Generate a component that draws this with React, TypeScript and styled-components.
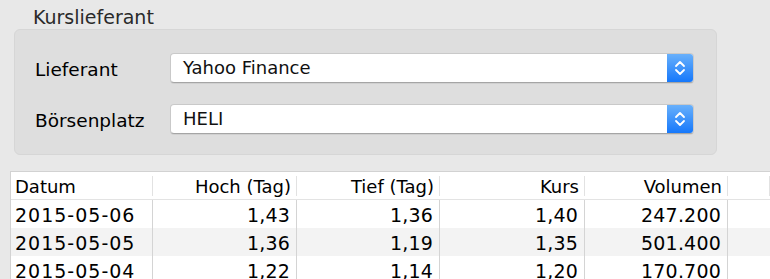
import styled, { createGlobalStyle } from 'styled-components';

const GlobalStyle = createGlobalStyle`
  html, body {
    margin: 0;
    padding: 0;
    background: #e8e8e8;
    font-family: "DejaVu Sans", "Liberation Sans", sans-serif;
    overflow: hidden;
  }
`;

const Page = styled.div`
  width: 770px;
  height: 279px;
  display: flex;
  flex-direction: column;
`;

const GroupTitle = styled.div`
  margin: 7px 0 2px 33px;
  height: 20px;
  line-height: 20px;
  font-size: 19px;
  color: #2a2a2a;
`;

const GroupBox = styled.div`
  margin-left: 14px;
  width: 703px;
  box-sizing: border-box;
  padding: 23px 22px 20px 20px;
  background: #dedede;
  border-radius: 6px;
  border: 1px solid #d6d6d6;
  display: flex;
  flex-direction: column;
  gap: 21px;
`;

const FieldRow = styled.div`
  display: flex;
  align-items: center;
`;

const Label = styled.div`
  width: 135px;
  margin-top: 3px;
  font-size: 18.5px;
  color: #000;
`;

const Popup = styled.div`
  flex: 1;
  height: 30px;
  box-sizing: border-box;
  display: flex;
  background: #fff;
  border: 1px solid #c9c9c9;
  border-bottom-color: #a5a5a5;
  border-radius: 4px;
  box-shadow: 0 1px 0 rgba(0, 0, 0, 0.06);
  overflow: hidden;
`;

const PopupValue = styled.div`
  flex: 1;
  padding-left: 12px;
  line-height: 28px;
  font-size: 18px;
  color: #111;
`;

const Stepper = styled.div`
  width: 26px;
  display: flex;
  align-items: center;
  justify-content: center;
  background: linear-gradient(#68b0fb, #1678fb);
`;

const Table = styled.div`
  margin: 16px 0 0 10px;
  background: #fff;
  border-top: 1px solid #d2d2d2;
  border-left: 1px solid #d2d2d2;
  flex: 1;
`;

const Cols = '142px 144px 143px 145px 143px 1fr';

const HeaderRow = styled.div`
  display: grid;
  grid-template-columns: ${Cols};
  height: 27px;
  border-bottom: 1px solid #e3e3e3;
`;

const HeaderCell = styled.div<{ $align?: string }>`
  display: flex;
  align-items: center;
  justify-content: ${(p) => (p.$align === 'left' ? 'flex-start' : 'flex-end')};
  padding: 1px 6px 0 4px;
  font-size: 18px;
  color: #000;
  position: relative;
  &::after {
    content: '';
    position: absolute;
    right: 0;
    top: 4px;
    bottom: 3px;
    width: 1px;
    background: #e2e2e2;
  }
`;

const Row = styled.div<{ $alt?: boolean }>`
  display: grid;
  grid-template-columns: ${Cols};
  height: 28px;
  background: ${(p) => (p.$alt ? '#f3f3f3' : '#fff')};
`;

const Cell = styled.div<{ $align?: string }>`
  display: flex;
  align-items: center;
  justify-content: ${(p) => (p.$align === 'left' ? 'flex-start' : 'flex-end')};
  padding: 1px 6px 0 4px;
  font-size: 19px;
  letter-spacing: ${(p) => (p.$align === 'left' ? '1px' : '0.2px')};
  color: #000;
  border-right: 1px solid #d4d4d4;
  &:last-child {
    border-right: none;
  }
`;

function Chevrons() {
  return (
    <svg width="12" height="18" viewBox="0 0 12 18">
      <path d="M2 7 L6 3 L10 7" fill="none" stroke="#fff" strokeWidth="1.8" strokeLinecap="round" strokeLinejoin="round" />
      <path d="M2 11 L6 15 L10 11" fill="none" stroke="#fff" strokeWidth="1.8" strokeLinecap="round" strokeLinejoin="round" />
    </svg>
  );
}

const rows = [
  ['2015-05-06', '1,43', '1,36', '1,40', '247.200'],
  ['2015-05-05', '1,36', '1,19', '1,35', '501.400'],
  ['2015-05-04', '1,22', '1,14', '1,20', '170.700'],
];

export default function App() {
  return (
    <Page>
      <GlobalStyle />
      <GroupTitle>Kurslieferant</GroupTitle>
      <GroupBox>
        <FieldRow>
          <Label>Lieferant</Label>
          <Popup>
            <PopupValue>Yahoo Finance</PopupValue>
            <Stepper><Chevrons /></Stepper>
          </Popup>
        </FieldRow>
        <FieldRow>
          <Label>Börsenplatz</Label>
          <Popup>
            <PopupValue>HELI</PopupValue>
            <Stepper><Chevrons /></Stepper>
          </Popup>
        </FieldRow>
      </GroupBox>
      <Table>
        <HeaderRow>
          <HeaderCell $align="left">Datum</HeaderCell>
          <HeaderCell>Hoch (Tag)</HeaderCell>
          <HeaderCell>Tief (Tag)</HeaderCell>
          <HeaderCell>Kurs</HeaderCell>
          <HeaderCell>Volumen</HeaderCell>
          <HeaderCell />
        </HeaderRow>
        {rows.map((r, i) => (
          <Row key={r[0]} $alt={i % 2 === 1}>
            <Cell $align="left">{r[0]}</Cell>
            <Cell>{r[1]}</Cell>
            <Cell>{r[2]}</Cell>
            <Cell>{r[3]}</Cell>
            <Cell>{r[4]}</Cell>
            <Cell />
          </Row>
        ))}
      </Table>
    </Page>
  );
}
